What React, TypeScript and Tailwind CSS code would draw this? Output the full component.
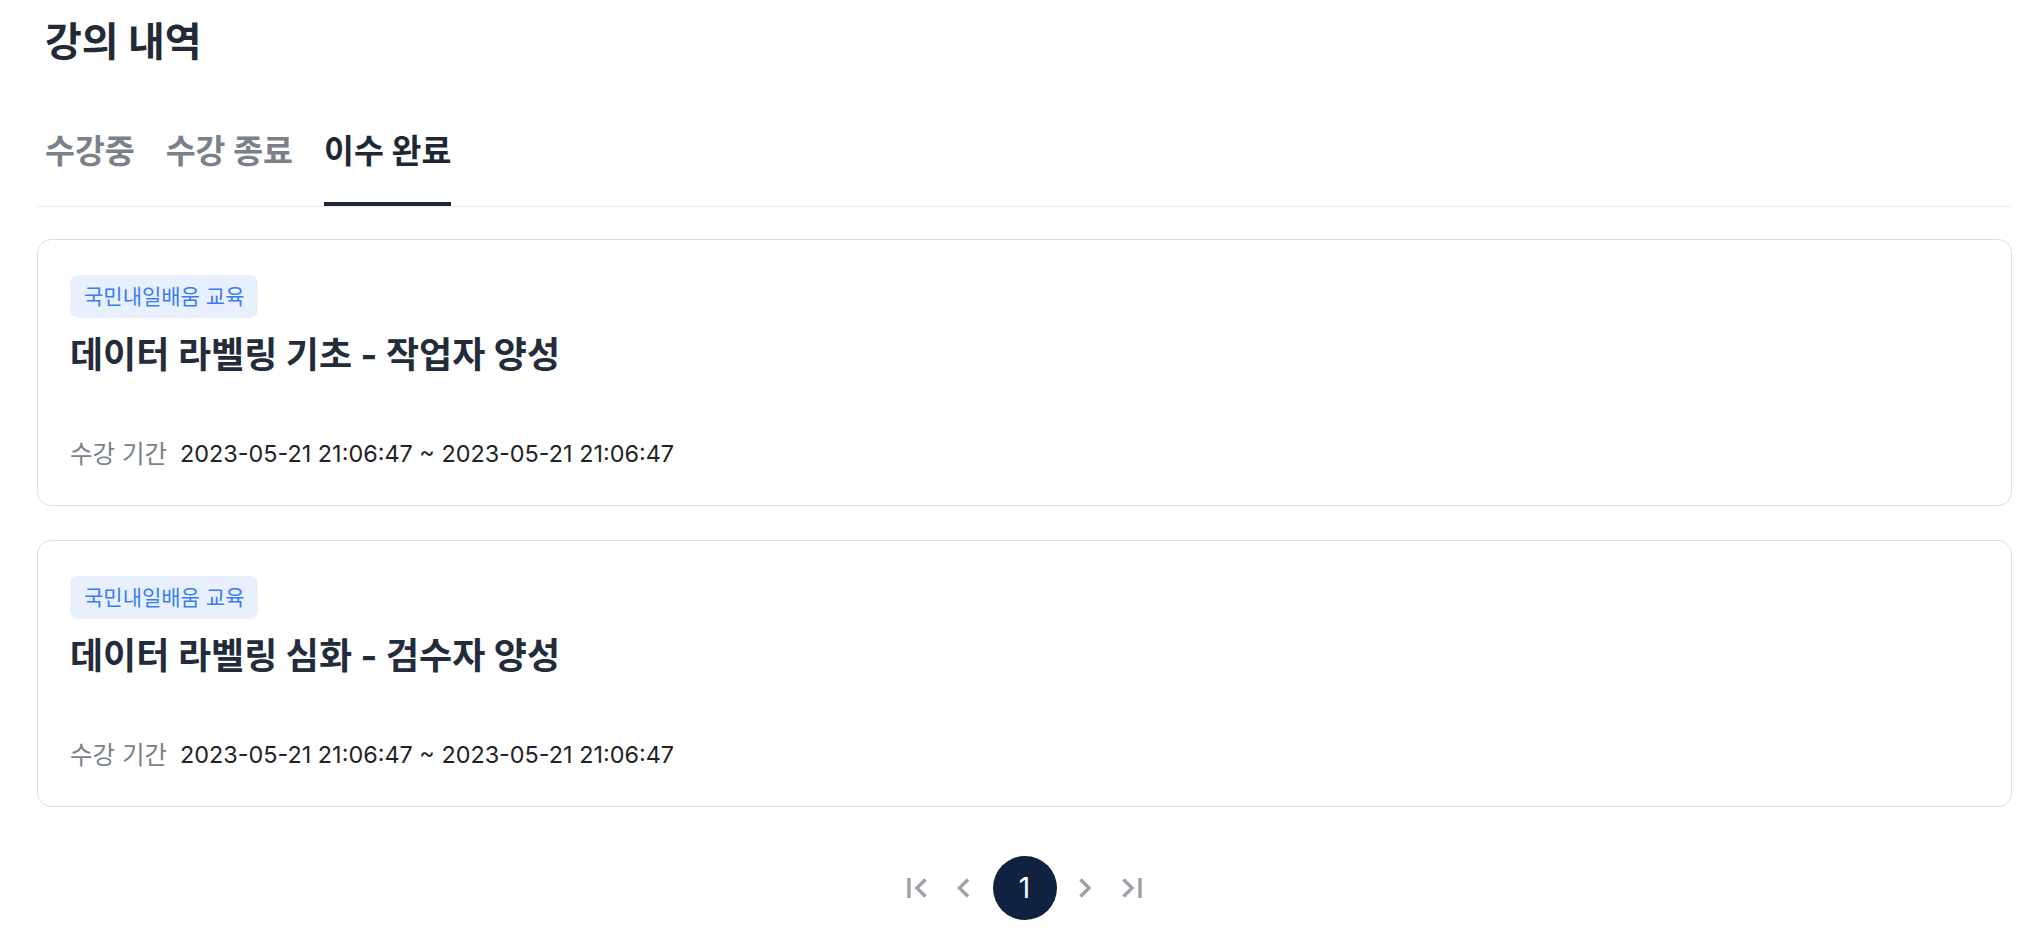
import React from 'react';

type Course = {
  id: number;
  category: string;
  title: string;
  start: string;
  end: string;
};

const courses: Course[] = [
  { id: 1, category: '국민내일배움 교육', title: '데이터 라벨링 기초 - 작업자 양성', start: '2023-05-21 21:06:47', end: '2023-05-21 21:06:47' },
  { id: 2, category: '국민내일배움 교육', title: '데이터 라벨링 심화 - 검수자 양성', start: '2023-05-21 21:06:47', end: '2023-05-21 21:06:47' },
];

const tabs = ['수강중', '수강 종료', '이수 완료'];

function FirstIcon() {
  return (
    <svg className="overflow-visible" width="24" height="24" viewBox="0 0 24 24" fill="none" stroke="#9ea3aa" strokeWidth="3.5">
      <path d="M6 2V22" />
      <path d="M22.5 3.5L14 12L22.5 20.5" />
    </svg>
  );
}

function PrevIcon() {
  return (
    <svg className="overflow-visible" width="24" height="24" viewBox="0 0 24 24" fill="none" stroke="#9ea3aa" strokeWidth="3.5">
      <path d="M18 3.5L9.5 12L18 20.5" />
    </svg>
  );
}

function NextIcon() {
  return (
    <svg className="overflow-visible" width="24" height="24" viewBox="0 0 24 24" fill="none" stroke="#9ea3aa" strokeWidth="3.5">
      <path d="M5.5 3.5L14 12L5.5 20.5" />
    </svg>
  );
}

function LastIcon() {
  return (
    <svg className="overflow-visible" width="24" height="24" viewBox="0 0 24 24" fill="none" stroke="#9ea3aa" strokeWidth="3.5">
      <path d="M1.5 3.5L10 12L1.5 20.5" />
      <path d="M18 2V22" />
    </svg>
  );
}

function CourseCard({ course }: { course: Course }) {
  return (
    <div className="flex flex-col rounded-[14px] border-[1.5px] border-[#dcdce1] bg-white px-[32px] pt-[35px] pb-[35px]">
      <div className="flex">
        <span className="rounded-[8px] bg-[#e8f0fe] px-[14px] py-[9.5px] text-[21px] leading-[24px] text-[#3b7cf4]">
          {course.category}
        </span>
      </div>
      <h2 className="mt-[13px] text-[36px] leading-[48px] font-bold text-[#232c3a]">{course.title}</h2>
      <div className="mt-[59px] flex items-center leading-[32px]">
        <span className="text-[24.5px] text-[#7a8189]">수강 기간</span>
        <span className="ml-[13px] text-[23.4px] text-[#1f2328]">
          {course.start} ~ {course.end}
        </span>
      </div>
    </div>
  );
}

export default function App() {
  const active = 2;
  return (
    <div className="min-h-screen bg-white pl-[37px] pr-[28px] font-['Inter','Noto_Sans_CJK_KR',sans-serif]">
      {/* Header */}
      <h1 className="ml-[8px] pt-[17px] text-[40px] leading-[50px] font-bold text-[#222a35]">강의 내역</h1>

      {/* Tabs */}
      <div className="mt-[65px] flex gap-[31px] border-b border-[#ececee] pl-[8px]">
        {tabs.map((t, i) => (
          <button
            key={t}
            className={
              i === active
                ? 'border-b-4 border-[#1f2733] pb-[30px] text-[32.5px] leading-[40px] font-bold text-[#1f2733]'
                : 'border-b-4 border-transparent pb-[30px] text-[32.5px] leading-[40px] font-bold text-[#7a8189]'
            }
          >
            {t}
          </button>
        ))}
      </div>

      {/* List */}
      <div className="mt-[32px] flex flex-col gap-[34px]">
        {courses.map((c) => (
          <CourseCard key={c.id} course={c} />
        ))}
      </div>

      {/* Pagination */}
      <div className="mt-[49px] flex items-center justify-center gap-[14px]">
        <button className="flex h-[40px] w-[33px] items-center justify-center">
          <FirstIcon />
        </button>
        <button className="flex h-[40px] w-[33px] items-center justify-center">
          <PrevIcon />
        </button>
        <button className="flex h-[64px] w-[64px] items-center justify-center rounded-full bg-[#10223f] text-[28px] text-white">
          1
        </button>
        <button className="flex h-[40px] w-[33px] items-center justify-center">
          <NextIcon />
        </button>
        <button className="flex h-[40px] w-[33px] items-center justify-center">
          <LastIcon />
        </button>
      </div>
    </div>
  );
}
